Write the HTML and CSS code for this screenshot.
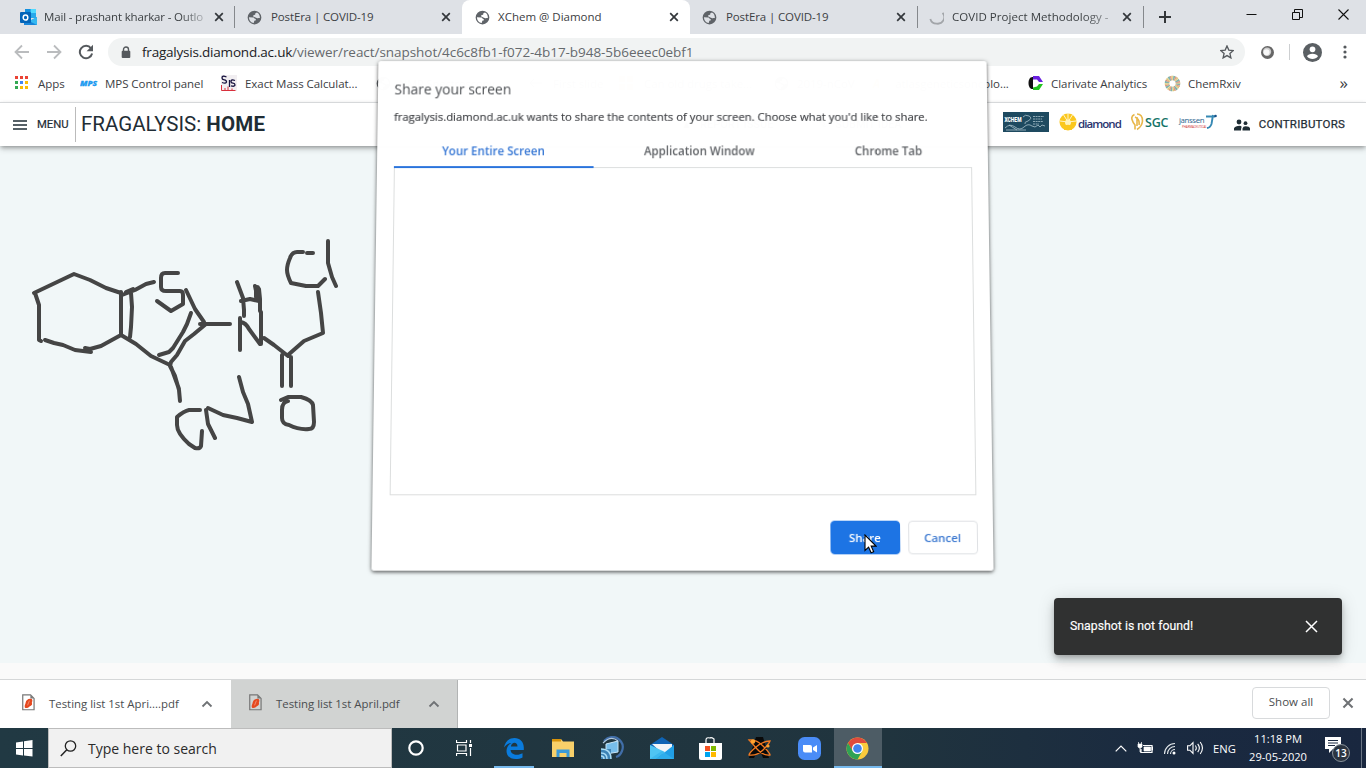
FILE: index.html
```html
<!DOCTYPE html>
<html lang="en">
<head>
<meta charset="utf-8">
<title>XChem @ Diamond</title>
<link rel="stylesheet" href="styles.css">
</head>
<body>
<svg class="defs" width="0" height="0">
  <symbol id="globe" viewBox="0 0 24 24"><path d="M12 1a11 11 0 1 0 0 22 11 11 0 0 0 0-22zM3.200 11.500l7.300.3c1.200.3 1.600 1.200 1.600 2.300 1.500.1 2.300.9 2.200 2.300l-2.600.8-.9 3.500C6.600 20.300 3.200 16.500 3.200 11.500zM20.600 13c-1.600-.2-3 .6-5.100-.1-1.700-.7-2.300-2-4.900-2.300-1-.4-.9-2.200.2-2.700l2.200-.5.400-2.200 2.500-1.300c3.100 1.300 4.900 4.600 4.700 9.100z" fill="#5f6368" fill-rule="evenodd"/></symbol>
  <symbol id="x" viewBox="0 0 10 10"><path d="m1.200 1.200 7.600 7.600m0-7.600L1.200 8.800" fill="none" stroke="currentColor" stroke-width="1.7"/></symbol>
  <symbol id="pdf" viewBox="0 0 14 18"><path d="M.8.8h8.400L13 4.600v12.200H.8z" fill="none" stroke="#777" stroke-width="1.300"/><path d="M9 .8v4h4z" fill="#777"/><path d="M8.700 5c2.800-.2 2.800 2 1.900 4.200 1 3-1.500 3.200-2.500 4-2 2.200-5.500 2.400-5.200 0 0-2 .8-2.200 1-4 .4-2.500 2.300-4 4.800-4.200z" fill="#e5481f"/><path d="m8 7-2 5" stroke="#f6a089" stroke-width=".8"/></symbol>
  <symbol id="up" viewBox="0 0 12 8"><path d="m1.500 6.500 4.500-4.500 4.500 4.500" fill="none" stroke="currentColor" stroke-width="1.800"/></symbol>
</svg>

<header class="tabs">
  <div class="tab first"><svg class="fav wide" viewBox="0 0 17 16"><path d="M5 0h11v9H5z" fill="#28a8ea"/><path d="M5 0h5v5H5z" fill="#1490df"/><path d="M11 0h5v4h-5z" fill="#50d9ff"/><path d="M4 8l6 4 7-4v8H4z" fill="#1784d8"/><path d="m9 12 8-4v8z" fill="#35b8f1"/><rect y="3" width="11" height="11" rx="1" fill="#0364b8"/><ellipse cx="5.500" cy="8.500" rx="2.300" ry="2.600" fill="none" stroke="#fff" stroke-width="1.500"/></svg><span class="title">Mail - prashant kharkar - Outlo</span><svg class="close"><use href="#x"/></svg></div>
  <div class="tab"><svg class="fav"><use href="#globe"/></svg><span class="title">PostEra | COVID-19</span><svg class="close"><use href="#x"/></svg></div>
  <div class="tab active"><svg class="fav"><use href="#globe"/></svg><span class="title">XChem @ Diamond</span><svg class="close"><use href="#x"/></svg></div>
  <div class="tab"><svg class="fav"><use href="#globe"/></svg><span class="title">PostEra | COVID-19</span><svg class="close"><use href="#x"/></svg></div>
  <div class="tab sep"><svg class="fav spin" viewBox="0 0 16 16"><path d="M14.500 3a7 7 0 0 1-6.500 11.500A7 7 0 0 1 1.400 9.500" fill="none" stroke="#a2a5a9" stroke-width="1.900"/></svg><span class="title">COVID Project Methodology -</span><svg class="close"><use href="#x"/></svg></div>
  <svg class="plus" viewBox="0 0 12 12"><path d="M6 0v12M0 6h12" stroke="#333639" stroke-width="2"/></svg>
  <div class="winbtns">
    <svg width="11" height="11"><path d="M.5 5.500h10" stroke="#111"/></svg>
    <svg width="11" height="11"><path d="M.5 3.500h7v7h-7zM2.500 3V.5h8v8H8" fill="none" stroke="#111"/></svg>
    <svg width="11" height="11"><path d="m.5.500 10 10m0-10-10 10" fill="none" stroke="#111" stroke-width="1.100"/></svg>
  </div>
</header>

<nav class="toolbar">
  <svg class="nav-ic" viewBox="0 0 16 16"><path d="M15 8H2m6-6.500L1.500 8 8 14.500" fill="none" stroke="#babcbe" stroke-width="1.800"/></svg>
  <svg class="nav-ic" viewBox="0 0 16 16"><path d="M1 8h13M8 1.500 14.500 8 8 14.500" fill="none" stroke="#babcbe" stroke-width="1.800"/></svg>
  <svg class="nav-ic" viewBox="0 0 16 16"><path d="M13 4.300A6.200 6.200 0 1 0 14.100 9.500" fill="none" stroke="#55595d" stroke-width="2"/><path d="M15 .8v6.400H8.600z" fill="#55595d"/></svg>
  <div class="omnibox">
    <svg class="lock" viewBox="0 0 10 13"><path d="M2.500 5.500V3.500a2.500 2.500 0 0 1 5 0v2" fill="none" stroke="#55595d" stroke-width="1.400"/><rect x=".7" y="4.800" width="8.600" height="7.200" rx="1" fill="#55595d"/></svg>
    <span class="url"><b>fragalysis.diamond.ac.uk</b>/viewer/react/snapshot/4c6c8fb1-f072-4b17-b948-5b6eeec0ebf1</span>
    <svg class="star" viewBox="0 0 14 14"><path d="m7 .9 1.800 4.200 4.500.4-3.400 3 1 4.400L7 10.600l-3.900 2.300 1-4.400-3.400-3 4.500-.4z" fill="none" stroke="#55595d" stroke-width="1.300"/></svg>
  </div>
  <svg class="ext" viewBox="0 0 14 14"><circle cx="7" cy="7" r="7" fill="#666"/><circle cx="6.500" cy="6.200" r="4.500" fill="#ccc"/><circle cx="6" cy="6.800" r="3.200" fill="#f8f8f8"/></svg>
  <i class="tool-sep"></i>
  <svg class="avatar" viewBox="0 0 18 18"><circle cx="9" cy="9" r="9" fill="#5a5f63"/><circle cx="9" cy="6" r="2.700" fill="#fff"/><path d="M3.800 12.600c1-3.200 9.400-3.200 10.400 0-2.300 3.400-8.100 3.400-10.400 0z" fill="#fff"/></svg>
  <svg class="dots" viewBox="0 0 4 14"><g fill="#55595d"><circle cx="2" cy="2" r="1.600"/><circle cx="2" cy="7" r="1.600"/><circle cx="2" cy="12" r="1.600"/></g></svg>
</nav>

<nav class="bookmarks">
  <span class="bm apps"><svg width="14" height="14"><path d="M0 0h3v3H0zM5 0h3v3H5zM10 0h3v3h-3z" fill="#ea4335"/><path d="M0 5h3v3H0z" fill="#34a853"/><path d="M5 5h3v3H5z" fill="#4285f4"/><path d="M10 5h3v3h-3zM5 10h3v3H5zM10 10h3v3h-3z" fill="#fbbc05"/><path d="M0 10h3v3H0z" fill="#34a853"/></svg>Apps</span>
  <span class="bm mps"><svg width="25" height="8" viewBox="0 0 25 8"><text x="0" y="6.600" textLength="17" lengthAdjust="spacingAndGlyphs" class="mpstext">MPS</text></svg>MPS Control panel</span>
  <span class="bm sis"><svg class="sisicon" viewBox="0 0 16 16"><rect width="16" height="16" fill="#f1eef1"/><path d="M5.500 2Q1 0 1 3q0 1.500 2.300 1.800T5.500 7Q5 9 1 7.500M8.500 5v7M14 5.500q-4-1.500-4 1 0 1.500 2 1.700T14 10q-.5 2-4 .8" fill="none" stroke="#17133f" stroke-width="1.300"/><path d="M.5 10v5.500h14M4 13v2M7 11.500v4M11 13.500v2" fill="none" stroke="#d8303c"/></svg>Exact Mass Calculat...</span>
  <span class="bm nmr"><svg class="fav"><use href="#globe"/></svg>NMR Spectroscopy</span>
  <span class="bm slide"><svg width="14" height="10"><path d="M1 5h12M5 1 1 5l4 4" fill="none" stroke="#777"/></svg>First slide</span>
  <span class="bm drugs"><svg width="15" height="15"><path d="M0 0h6v6H0zM8 0h6v6H8zM0 8h6v6H0zM8 8h6v6H8z" fill="#e7a96f"/></svg>Can old drugs take...</span>
  <span class="bm ncov"><svg class="fav"><use href="#globe"/></svg>2019-nCoV</span>
  <span class="bm atlas"><i>A</i>atlasgeneticsoncolo...</span>
  <span class="bm clar"><svg width="15" height="16"><path d="M5 2v12C-1 15-1 1 5 2z" fill="#111"/><path d="M5 1h6l4 6h-4L9 4.500H5z" fill="#6a1fe0"/><path d="M5 15h6l4-6h-4l-2 2.500-4 1z" fill="#22c31f"/></svg>Clarivate Analytics</span>
  <span class="bm chem"><svg width="17" height="17" viewBox="-8.500 -8.500 17 17"><g fill="none" stroke-width="4.500"><circle r="5.500" stroke="#f0e3c4"/><circle r="5.500" stroke="#7fb3ae" stroke-dasharray="1.500 2.820"/><circle r="5.500" stroke="#dd8f80" stroke-dasharray="1 3.320" stroke-dashoffset="-1.600"/><circle r="5.500" stroke="#dcc878" stroke-dasharray="1 3.320" stroke-dashoffset="-2.800"/></g></svg>ChemRxiv</span>
  <span class="more">»</span>
</nav>

<section class="apphead">
  <svg class="burger" width="14" height="10"><path d="M0 1h14M0 5h14M0 9h14" stroke="#1f2d35" stroke-width="1.500"/></svg>
  <span class="menu">MENU</span>
  <h1>FRAGALYSIS: <b>HOME</b></h1>
  <span class="ghost report">▲&nbsp;&nbsp; REPORT ISSUE</span>
  <span class="ghost idea">✎&nbsp;&nbsp; SUBMIT IDEA</span>
  <div class="logos">
    <svg class="xchem" viewBox="0 0 46 20"><rect width="46" height="20" fill="#1e4a60"/><text x="1.500" y="10" textLength="17" lengthAdjust="spacingAndGlyphs" class="xtext">XCHEM</text><g fill="none" stroke="#a9c1cb" stroke-width=".8"><path d="M20 5q2-3 6-1t-1 5q-4 1-3 3M2 16q5-5 10-1t9 0 8-1l3 1 3-2 2 2 2-2 3 1M3 18h20M6 13l8 5"/><path d="M30 4.500h11M30 7h9M30 9.500h10M30 12h6" stroke-dasharray="2 .6"/></g></svg>
    <span class="diamond"><svg width="18" height="18" viewBox="0 0 18 18"><circle cx="9" cy="9" r="8.500" fill="#fbc71d"/><path d="m9 9-8-1m8 1L4 1m5 8 0-9m0 9 5-8M9 9l8-1" stroke="#fff4c8" stroke-width="1"/><circle cx="9" cy="9.500" r="3" fill="#fff3ba"/><path d="M5 17c0-7 8-7 8 0z" fill="#fbc71d"/></svg><b>diamond</b></span>
    <span class="sgc"><svg width="13" height="18" viewBox="0 0 13 18"><path d="M3.500 1.500Q0 3 1 6.500T4 12v4.500M6 1q5.500 0 5.500 7Q11 13.500 6 16.500M6 4v9M4 4q5 2 4 8" fill="none" stroke="#e8b74a" stroke-width="1.600"/></svg><b>SGC</b></span>
    <span class="janssen"><span>janssen<small>PHARMACEUTICAL</small></span><svg width="11" height="16" viewBox="0 0 11 16"><path d="M0 2.500h9M7 1 5.500 10Q4 14 1 14" fill="none" stroke="#3689b4" stroke-width="1.900"/><circle cx="9.500" cy="2" r="1.300" fill="#164f88"/></svg></span>
  </div>
  <svg class="people" viewBox="0 0 16 12"><g fill="#1f2d35"><circle cx="5" cy="3" r="2.400"/><circle cx="11.500" cy="4.200" r="1.900"/><path d="M0 11.500V9.300Q1 6.700 6 6.700 8 6.800 7.500 8.500 7 9.500 7 11.500zM8.500 11.500V9.500Q9 7.300 11.500 7.300q4 .1 4.500 2v2.200z"/></g></svg>
  <span class="contrib">CONTRIBUTORS</span>
</section>

<main class="canvas">
  <svg class="sketch" viewBox="0 220 370 250">
    <g fill="none" stroke="#454545" stroke-width="4" stroke-linecap="round" stroke-linejoin="round">
      <path d="M34 293 74 274l16 6 16 8 15 5M35 293l4 12v35l2 1M45 340l9 3 9 2 12 5 16 2M85 348l5 1 11-3 20-11"/>
      <path d="M121 292v42M131 293l1 14-1 20-1 10M122 295l13-5 11-6 8-2M126 292l7-3M121 335l15 9 15 12 19 9M159 355l10-3 4-4 10-16 4-8 4-11"/>
      <path d="M178 273h-13q-4 0-4 5v9q0 4 5 4h14q3 0 3 4v9l-12 7-14-10M186 290l9 19 9 13-1 2M200 324h30M206 324l-12 10-9 7-8 14-6 7-1 4M170 366l5 10 4 14 1 11M171 367l8 22"/>
      <path d="M237 282l6 16 1 12v6M241 301l9-2 9 2M255 286l3 14M259 289l1 10v12M256 288l3 9M240 318v32M241 322q5 1 8 7l11 15M261 312v32M264 338l10 7 14 11M288 355l16-14 19-8-2-20-3-21M282 355v31M291 357v29"/>
      <path d="M303 252h-6q-5 0-7 6-3 7-3 12 0 5 4 13l15 3h12l7-7M307 253h6M328 241v22l4 14 4 9"/>
      <path d="M281 400l7-3h13q11 3 12 8l1 17q0 7-5 7-10 1-20-4-7-1-7-7v-8q0-8 6-9M200 410h-11q-5 1-12 7v8q0 8 12 19l6 4q5 1 6-2l1-15M252 422l-4-18-5-12-4-15M206 410l2 14 7 14M208 408l15 7 14 3 15 4"/>
      <path d="M257 288v9" stroke-width="6"/>
    </g>
  </svg>
  <div class="snack"><span>Snapshot is not found!</span><svg width="13" height="13"><path d="m1 1 11 11M12 1 1 12" stroke="#fff" stroke-width="1.500"/></svg></div>
</main>

<section class="shelf">
  <div class="dl"><svg class="pdf"><use href="#pdf"/></svg><span>Testing list 1st Apri....pdf</span><svg class="chev"><use href="#up"/></svg></div>
  <div class="dl hover"><svg class="pdf"><use href="#pdf"/></svg><span>Testing list 1st April.pdf</span><svg class="chev"><use href="#up"/></svg></div>
  <button class="showall">Show all</button>
  <svg class="shelfx"><use href="#x"/></svg>
</section>

<footer class="taskbar">
  <span class="start"><svg width="17" height="17"><path d="m0 2.500 7-1v6.500H0zM8 1.300 16.500 0v8H8zM0 9h7v6.500l-7-1zM8 9h8.500v7.500L8 15.500z" fill="#fff"/></svg></span>
  <div class="search"><svg width="17" height="17"><circle cx="10.500" cy="6" r="5.200" fill="none" stroke="#222" stroke-width="1.300"/><path d="M6.800 9.800.8 16" stroke="#222" stroke-width="1.500"/></svg><span>Type here to search</span></div>
  <span class="task"><svg width="16" height="16"><circle cx="8" cy="8" r="6.700" fill="none" stroke="#fff" stroke-width="2.200"/></svg></span>
  <span class="task"><svg width="17" height="16"><path d="M.5 0v2.500h10V0M.5 16v-2.500h10V16M1.500 5h8.500v6H1.500zM14.500 0v3M14.500 8v8" fill="none" stroke="#fff" stroke-width="1.200"/><path d="M13 4h3v3h-3z" fill="#fff"/></svg></span>
  <span class="task run edge"><svg width="20" height="21" viewBox="0 0 20 21"><path d="M0 9.500C1 3.500 5 0 10.500 0 16 0 19.800 4 19.800 9.500V12H6.600c0 3.200 3.100 4.700 6.200 4.700 2.200 0 4.200-.6 5.700-1.500v4.200c-2 1.100-4.300 1.600-6.900 1.600C6.200 21 2.500 18 2.500 13c0-3.600 2-6.500 5-8C4.500 5 2 6.500 0 9.500zM6.900 8.500h6.600c0-5-5.900-4.800-6.600 0z" fill="#0a7bdc"/></svg></span>
  <span class="task"><svg width="22" height="18"><path d="M0 0h9l2 2.500h11V18H0z" fill="#f8d06a"/><path d="M0 0h9v2.500H0z" fill="#d8930a"/><path d="M4.500 10.500h13V18h-3v-4h-7v4h-3z" fill="#3a9ad9"/></svg></span>
  <span class="task"><svg width="24" height="24" viewBox="0 0 24 24"><path d="M4 5Q10-1 17 2q8 5 5 13-2 5-6 6" fill="none" stroke="#416ea8" stroke-width="2.200"/><path d="M3 7Q11-1 18 5" fill="none" stroke="#b0c8df" stroke-width="1.200"/><path d="m6 8 12-3v11l-12 2z" fill="#77bdea" stroke="#c8e5f7"/><path d="M1 13h10v10H1z" fill="#3d83b5"/><path d="M1 13q10 0 10 10M1 17q6 0 6 6M1 20q3 0 3 3" fill="none" stroke="#a9dcf5" stroke-width="1.500"/></svg></span>
  <span class="task"><svg width="24" height="22"><path d="M0 8 12 0l12 8v14H0z" fill="#0f64b5"/><path d="m2 7h20v7l-9 3z" fill="#f1f5f8"/><path d="m0 8 15 7-9 7H0z" fill="#4fc5f3"/><path d="m24 8-18 14h18z" fill="#219fe6"/><path d="m12 14 12 8H0z" fill="#35b3ec" opacity=".7"/></svg></span>
  <span class="task"><svg width="23" height="23"><path d="M7 7V3q0-3 4-2 1-1 4 1v5" fill="none" stroke="#fff" stroke-width="1.200"/><path d="M0 6h23v15q0 2-2 2H2q-2 0-2-2z" fill="#fff"/><path d="M6 9h5v5H6z" fill="#f25022"/><path d="M12 9h5v5h-5z" fill="#7fba00"/><path d="M6 15h5v5H6z" fill="#00a4ef"/><path d="M12 15h5v5h-5z" fill="#ffb900"/></svg></span>
  <span class="task"><svg width="25" height="22" viewBox="0 0 25 22"><path d="m9 0h7l6 21h-6l-1.500-4H9l-2 4H2z" fill="#090909"/><g fill="none" stroke="#f37a21" stroke-width="1.300"><path d="M2 3Q9 2 16 9t7 9q-7 1-13-6T2 3zM23 4Q16 4 9 10T2 18q8 1 14-5t7-9z"/></g><circle cx="6" cy="4.500" r="2.200" fill="#ffa32e"/><circle cx="21" cy="9" r="1.600" fill="#ffa32e"/></svg></span>
  <span class="task"><svg width="23" height="23"><rect width="23" height="23" rx="6.500" fill="#4a8cf7"/><path d="M5 8h7q2 0 2 2v5.500H7q-2 0-2-2zM15 10.500l4-2.500v7.500L15 13z" fill="#fff"/></svg></span>
  <span class="task run chrome"><svg width="23" height="23" viewBox="-11.500 -11.500 23 23"><circle r="11" fill="#fbcb3c"/><path d="M-9.500-5.500A11 11 0 0 1 9.500-5.500H0L-4.800 2.700z" fill="#df4a3c"/><path d="M-9.500-5.500A11 11 0 0 0 0 11L4.800 2.500-4.800 2.500z" fill="#2fa255"/><circle r="5.500" fill="#fff"/><circle r="4.300" fill="#4183ee"/></svg></span>
  <div class="tray">
    <svg width="12" height="7"><path d="m.7 6.300 5.300-5.300 5.300 5.300" fill="none" stroke="#fff" stroke-width="1.200"/></svg>
    <svg width="16" height="12"><path d="M6 3.500h9v7H4V7" fill="none" stroke="#fff" stroke-width="1.200"/><path d="M7 5h6.500v4H7zM15 5h1v3h-1zM1 2h4v3L3.500 6h-1L1 5zM1.500 0v2M4.500 0v2M3 6v4h1" fill="#fff" stroke="#fff" stroke-width=".7"/></svg>
    <svg width="14" height="14"><path d="M1.500 13A10.500 10.500 0 0 1 12 2.500M4.500 13A7.500 7.500 0 0 1 12 5.500M7.500 13A4.500 4.500 0 0 1 12 8.500" fill="none" stroke="#e4e9ec" stroke-width="1.100"/><circle cx="11" cy="12" r="1.500" fill="#fff"/></svg>
    <svg width="17" height="14"><path d="M.6 4.800h2.300L6 1.700v10.600L2.900 9.200H.6zM8.300 4.500q2 2.500 0 5M10.700 2.800q3.300 4.200 0 8.400M13.200 1q4.500 6 0 12" fill="none" stroke="#fff" stroke-width="1.100"/></svg>
    <span>ENG</span>
    <div class="clock"><div>11:18 PM</div><div>29-05-2020</div></div>
    <div class="action"><svg width="17" height="16"><path d="M0 0h16v12H8l-4 4v-4H0z" fill="#fff"/><path d="M3 3.500h10M3 6h10M3 8.500h7" stroke="#1b2940"/></svg><b>13</b></div>
    <i class="peek"></i>
  </div>
</footer>

<div class="dialog">
  <h2>Share your screen</h2>
  <p>fragalysis.diamond.ac.uk wants to share the contents of your screen. Choose what you'd like to share.</p>
  <div class="dtabs"><span class="on">Your Entire Screen</span><span>Application Window</span><span>Chrome Tab</span></div>
  <div class="sources"></div>
  <div class="actions"><button class="primary">Share</button><button>Cancel</button></div>
</div>
<svg class="cursor" viewBox="0 0 13 20"><path d="M1 1v15.500l3.600-3.400 2.500 5.700 2.600-1.100-2.500-5.600H12z" fill="#fff" stroke="#000" stroke-width="1.100"/></svg>
</body>
</html>
```
FILE: styles.css
```css
* { box-sizing: border-box; }
body { margin: 0; width: 1366px; height: 768px; overflow: hidden; position: relative; display: flex; flex-direction: column; font-family: "Open Sans", "Noto Sans", sans-serif; font-size: 11.5px; color: #3c4043; background: #fff; }
svg { flex: none; display: block; }
.defs { position: absolute; }
svg.fav { width: 15px; height: 15px; }

.tabs { height: 34px; flex: none; background: #dee1e6; display: flex; align-items: center; padding-left: 8px; }
.tab { width: 227px; height: 34px; display: flex; align-items: center; padding: 0 11px 0 12px; flex: none; white-space: nowrap; }
.tab .title { flex: 1; margin-left: 9px; letter-spacing: -.12px; line-height: 20px; }
.tab.first { border-style: solid; border-width: 0 1px 0 0; border-image: linear-gradient(transparent 20%, #85888c 20%, #85888c 80%, transparent 80%) 1; padding-right: 10px; }
.tab.first .title { margin-left: 7px; letter-spacing: -.17px; -webkit-mask-image: linear-gradient(90deg, #000 136px, rgba(0,0,0,.15) 164px); mask-image: linear-gradient(90deg, #000 136px, rgba(0,0,0,.15) 164px); }
svg.fav.wide { width: 17px; height: 16px; }
.tab.active { background: #fff; border-radius: 8px 8px 0 0; width: 228px; padding-left: 13px; }
.tab.active .title { margin-left: 8px; letter-spacing: 0; }
.tab.sep { border-style: solid; border-width: 0 1px; border-image: linear-gradient(transparent 20%, #85888c 20%, #85888c 80%, transparent 80%) 1; padding-left: 11px; }
.tab.sep .title { margin-left: 8px; letter-spacing: .04px; -webkit-mask-image: linear-gradient(90deg, #000 130px, rgba(0,0,0,.4) 160px); mask-image: linear-gradient(90deg, #000 130px, rgba(0,0,0,.4) 160px); }
.close { width: 10px; height: 10px; color: #33373b; }
.plus { width: 12px; height: 12px; margin-left: 15px; }
.winbtns { margin-left: auto; display: flex; gap: 35px; padding-right: 17px; align-self: flex-start; padding-top: 9px; }

.toolbar { height: 36px; flex: none; display: flex; align-items: center; padding-left: 14px; }
.nav-ic { width: 16px; height: 16px; margin-right: 16px; }
.omnibox { width: 1137px; height: 28px; margin-left: -2px; border-radius: 14px; background: #f1f3f3; display: flex; align-items: center; padding: 0 11px 0 13px; }
.lock { width: 10px; height: 13px; margin-right: 11px; }
.url { font-size: 13.5px; color: #65696d; letter-spacing: -.05px; white-space: nowrap; }
.url b { font-weight: 400; color: #202124; letter-spacing: -.21px; }
.star { width: 14px; height: 14px; margin-left: auto; }
.ext { width: 13px; height: 13px; margin-left: 16px; }
.tool-sep { width: 1px; height: 16px; background: #cdcfd1; margin: 0 13px 0 15px; }
.avatar { width: 19px; height: 19px; }
.dots { width: 4px; height: 14px; margin-left: 21px; }

.bookmarks { height: 33px; flex: none; border-bottom: 1px solid #d6d8da; display: flex; align-items: center; padding: 0 18px 6px 15px; white-space: nowrap; letter-spacing: -.05px; }
.bm { display: flex; align-items: center; flex: none; }
.apps { width: 65px; gap: 9px; }
.mps { width: 141px; }
.mpstext { font: italic 900 7.500px "Open Sans", sans-serif; fill: #1d9bf0; stroke: #1d9bf0; stroke-width: .3px; }
.sisicon { width: 16px; height: 16px; margin-right: 8px; }
.sis { width: 155px; }
.nmr { width: 153px; gap: 8px; font-size: 11px; }
.slide { width: 90px; gap: 10px; }
.drugs { width: 155px; gap: 10px; }
.ncov { width: 99px; gap: 8px; }
.atlas { width: 155px; gap: 15px; }
.atlas i { color: #d6a21d; font-weight: 700; }
.clar { width: 136px; gap: 8px; }
.chem { gap: 7px; }
.more { margin-left: auto; font-size: 17px; line-height: 14px; color: #3c4043; }

.apphead { height: 44px; flex: none; display: flex; align-items: center; padding: 0 21px 0 13px; font-family: Roboto, sans-serif; color: #1f2d35; position: relative; z-index: 1; box-shadow: 0 2px 4px -1px rgba(0,0,0,.3), 0 3px 6px rgba(0,0,0,.18); background: #fff; margin-top: -1px; border-top: 1px solid #d6d8da; white-space: nowrap; }
.menu { margin: -1px 6px 0 10px; font-size: 11.3px; font-weight: 400; -webkit-text-stroke: .2px; width: 32px; }
.apphead h1 { margin: 0; font-size: 20.500px; font-weight: 400; line-height: 35px; border-left: 1px solid #bbb; padding-left: 5px; width: 606px; }
.apphead h1 b { font-weight: 700; letter-spacing: .2px; }
.ghost { font-size: 11px; font-weight: 500; flex: none; }
.report { width: 137px; }
.idea { width: 130px; }
.logos { display: flex; align-items: center; position: absolute; left: 1003px; top: 9px; height: 20px; }
.xchem { width: 46px; height: 20px; }
.xtext { font: 900 8px Roboto, sans-serif; fill: #fff; }
.diamond { display: flex; align-items: center; margin-left: 10px; width: 60px; }
.diamond b { font: 600 11.500px/18px "Open Sans", sans-serif; color: #29346f; letter-spacing: -.95px; margin: 3px 0 0 1px; }
.sgc { display: flex; align-items: center; margin-left: 12px; width: 40px; }
.sgc b { font: 600 12.500px/18px "Open Sans", sans-serif; color: #157467; letter-spacing: -.2px; margin: 2px 0 0 1px; }
.janssen { display: flex; margin-left: 8px; align-items: flex-start; }
.janssen > span { font: 7.800px/9px "Noto Sans", sans-serif; color: #356a92; letter-spacing: -.4px; padding-top: 2px; }
.janssen small { display: block; font-size: 3px; line-height: 4px; color: #d23c3c; margin-left: 3px; letter-spacing: -.1px; }
.janssen svg { margin: 0 0 0 -1px; }
.people { width: 16px; height: 12px; position: absolute; left: 1234px; top: 16px; }
.contrib { position: absolute; right: 21px; top: 14px; font-size: 11.500px; font-weight: 400; -webkit-text-stroke: .25px; letter-spacing: .22px; line-height: 14px; }

.canvas { height: 533px; flex: none; background: linear-gradient(#f1f7f8 517px, #fafafa 517px); position: relative; }
.sketch { width: 370px; height: 250px; margin-top: 74px; }
.snack { position: absolute; left: 1054px; top: 452px; width: 288px; height: 57px; border-radius: 4px; background: #303131; color: #fff; display: flex; align-items: center; justify-content: space-between; padding: 0 24px 0 16px; font: 12.300px Roboto, sans-serif; -webkit-text-stroke: .15px; box-shadow: 0 3px 5px -1px rgba(0,0,0,.2), 0 6px 10px rgba(0,0,0,.14), 0 1px 18px rgba(0,0,0,.12); }
.snack span { padding-bottom: 2px; }

.shelf { height: 49px; flex: none; border-top: 1px solid #d5d7d8; display: flex; align-items: center; background: #fff; color: #4a4d50; font-size: 11.400px; }
.dl { height: 48px; width: 231px; display: flex; align-items: center; padding: 0 0 1px 22px; white-space: nowrap; }
.dl span { width: 140px; margin-left: 14px; }
.dl.hover { background: #d1d3d2; width: 227px; padding-left: 18px; border-right: 1px solid #b2b4b4; }
.pdf { width: 13px; height: 17px; margin-top: -2px; }
.chev { width: 12px; height: 8px; margin-left: 12px; color: #6f7275; }
.showall { margin: -2px 0 0 auto; width: 78px; height: 32px; border: 1px solid #d8dadc; border-radius: 4px; background: #fff; font: 500 11.500px/28px "Open Sans", sans-serif; color: #4a4d50; padding: 0 0 2px; }
.shelfx { width: 12px; height: 12px; margin: -2px 12px 0; color: #6f7275; }

.taskbar { height: 40px; flex: none; display: flex; background: linear-gradient(90deg, #213943, #20343e 65%, #1a2a40 85%, #19273f); color: #fff; }
.start { width: 48px; display: grid; place-items: center; }
.search { width: 344px; background: #f1f1f1; border: 1px solid #bcbcbc; display: flex; align-items: center; gap: 11px; padding-left: 11px; font-size: 14px; color: #2b2b2b; white-space: nowrap; margin-right: -1px; }
.task { width: 49.200px; display: grid; place-items: center; flex: none; }
.task.run { background: linear-gradient(#76b9ed, #76b9ed) bottom / 40px 2px no-repeat; }
.task.chrome { width: 48px; background: linear-gradient(#76b9ed, #76b9ed) bottom / 100% 2px no-repeat, #4d5c65; }
.tray { margin-left: auto; display: flex; align-items: center; padding-right: 4px; font-size: 11.200px; position: relative; }
.tray > svg { margin-right: 10px; }
.tray > span { width: 24px; margin-left: -1px; }
.clock { text-align: center; line-height: 18px; margin-left: 11px; width: 60px; font-size: 11.100px; }
.action { position: relative; width: 28px; height: 24px; margin-left: 17px; padding-top: 1px; }
.action b { position: absolute; left: 7px; top: 8px; width: 18px; height: 18px; border-radius: 50%; background: #2b3440; border: 1px solid #8a939b; font: 600 10px/16px "Open Sans", sans-serif; text-align: center; }
.peek { width: 1px; height: 40px; background: #6a7584; margin-left: 8px; }

.dialog { position: absolute; z-index: 5; left: 375px; top: 58px; width: 615px; height: 510px; background: rgba(255,255,255,.985); transform: perspective(1000px) rotateX(2.560deg); border-radius: 3px; box-shadow: 0 1px 4px rgba(0,0,0,.55), 0 2px 3px rgba(0,0,0,.2); padding: 17px 16.500px 0; }
.dialog h2 { font-size: 14px; line-height: 24px; font-weight: 400; margin: 0; color: #4b4e52; }
.dialog p { margin: 6px 0 0; font-size: 11.400px; line-height: 20px; white-space: nowrap; color: #3f4145; -webkit-text-stroke: .15px; }
.dtabs { display: grid; grid-template-columns: 201px 214px 1fr; height: 41px; padding-top: 7px; line-height: 36px; font-size: 11.600px; font-weight: 600; color: #606367; text-align: center; }
.dtabs .on { color: #3576d4; border-bottom: 2px solid #2a74dc; position: relative; z-index: 1; height: 34.500px; }
.sources { height: 327.500px; border: 1px solid #dcdede; }
.actions { display: flex; justify-content: flex-end; gap: 8px; padding-top: 25px; margin-right: -1px; }
.actions button { width: 69px; height: 33px; border-radius: 4px; border: 1px solid #dfe1e4; background: #fff; color: #3b78d0; font: 600 11.400px "Open Sans", sans-serif; padding: 0; }
.actions .primary { background: #1d74e4; border-color: #1d74e4; color: #fff; }
.cursor { position: absolute; z-index: 6; left: 864px; top: 534px; width: 13px; height: 20px; }
```
